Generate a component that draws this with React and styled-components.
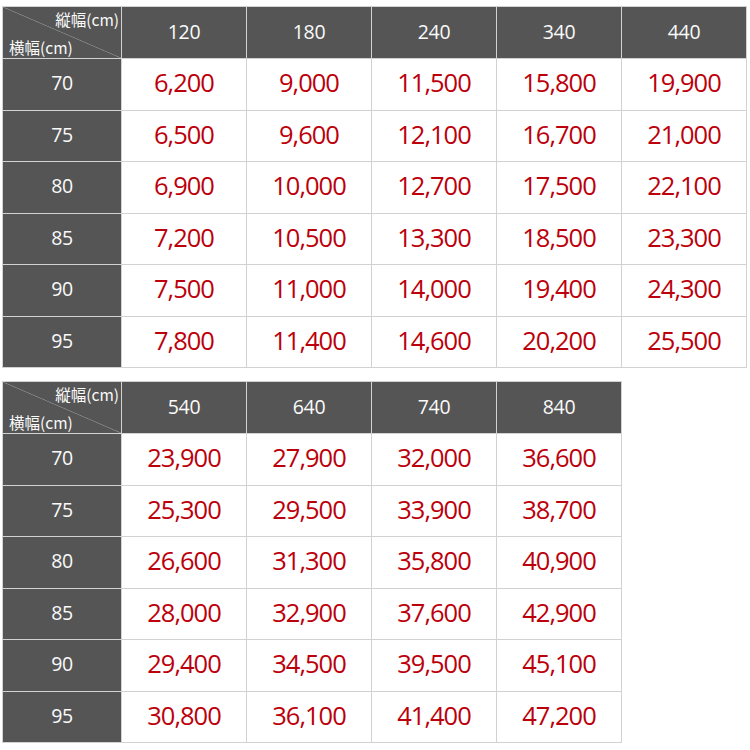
import React from "react";
import styled, { createGlobalStyle } from "styled-components";

const Global = createGlobalStyle`
  html, body { margin: 0; padding: 0; background: #fff; }
  body { font-family: "Open Sans", "Noto Sans CJK JP", sans-serif; }
`;

const Page = styled.div`
  padding: 6px 0 0 2px;
  display: flex;
  flex-direction: column;
  gap: 13px;
  align-items: flex-start;
`;

const Grid = styled.div`
  display: grid;
  grid-template-columns: 118px repeat(${(p) => p.$cols}, 124px);
  grid-template-rows: 51px repeat(6, 50.5px);
  gap: 1px;
  padding: 1px;
  background: #d2d2d2;
`;

const Head = styled.div`
  background: #555555;
  color: #fafafa;
  display: flex;
  align-items: center;
  justify-content: center;
  padding-bottom: 3px;
  font-size: 19.5px;
  letter-spacing: -0.3px;
`;

const Corner = styled.div`
  background: linear-gradient(
    to top right,
    #555555 calc(50% - 0.7px),
    #8a8a8a 50%,
    #555555 calc(50% + 0.7px)
  );
  color: #fafafa;
  font-family: "Noto Sans CJK JP", sans-serif;
  font-size: 15.5px;
  display: flex;
  flex-direction: column;
  justify-content: space-between;
  padding: 2px 2px 1px 6px;
`;

const CornerTop = styled.span`
  align-self: flex-end;
  line-height: 20px;
`;

const CornerBottom = styled.span`
  align-self: flex-start;
  line-height: 20px;
`;

const Price = styled.div`
  background: #fff;
  color: #bc000b;
  display: flex;
  align-items: center;
  justify-content: center;
  padding-bottom: 4px;
  font-size: 25.5px;
  letter-spacing: -1px;
`;

const rowsH = [70, 75, 80, 85, 90, 95];

const t1 = {
  cols: [120, 180, 240, 340, 440],
  data: [
    ["6,200", "9,000", "11,500", "15,800", "19,900"],
    ["6,500", "9,600", "12,100", "16,700", "21,000"],
    ["6,900", "10,000", "12,700", "17,500", "22,100"],
    ["7,200", "10,500", "13,300", "18,500", "23,300"],
    ["7,500", "11,000", "14,000", "19,400", "24,300"],
    ["7,800", "11,400", "14,600", "20,200", "25,500"],
  ],
};

const t2 = {
  cols: [540, 640, 740, 840],
  data: [
    ["23,900", "27,900", "32,000", "36,600"],
    ["25,300", "29,500", "33,900", "38,700"],
    ["26,600", "31,300", "35,800", "40,900"],
    ["28,000", "32,900", "37,600", "42,900"],
    ["29,400", "34,500", "39,500", "45,100"],
    ["30,800", "36,100", "41,400", "47,200"],
  ],
};

function PriceTable({ table }) {
  return (
    <Grid $cols={table.cols.length}>
      <Corner>
        <CornerTop>縦幅(cm)</CornerTop>
        <CornerBottom>横幅(cm)</CornerBottom>
      </Corner>
      {table.cols.map((c) => (
        <Head key={c}>{c}</Head>
      ))}
      {table.data.map((row, i) => (
        <React.Fragment key={i}>
          <Head>{rowsH[i]}</Head>
          {row.map((v, j) => (
            <Price key={j}>{v}</Price>
          ))}
        </React.Fragment>
      ))}
    </Grid>
  );
}

export default function App() {
  return (
    <>
      <Global />
      <Page>
        <PriceTable table={t1} />
        <PriceTable table={t2} />
      </Page>
    </>
  );
}
